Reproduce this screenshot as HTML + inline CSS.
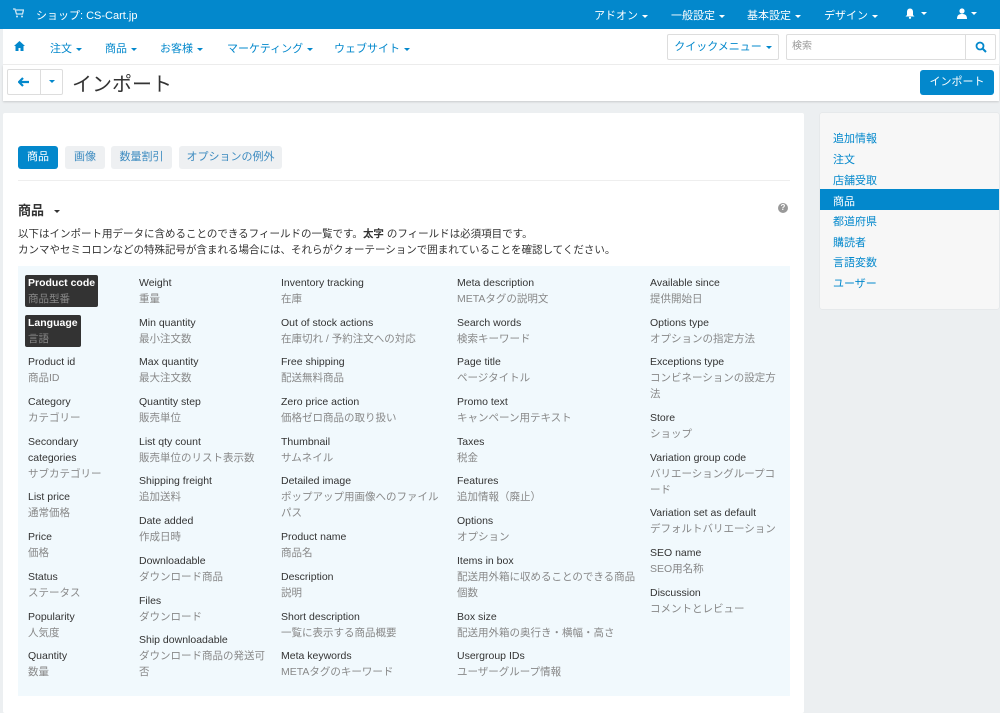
<!DOCTYPE html>
<html><head><meta charset="utf-8">
<style>
*{box-sizing:border-box;margin:0;padding:0}
body{width:1000px;height:691px;overflow:hidden;background:#eceff1;font-family:"Liberation Sans","Noto Sans CJK JP",sans-serif;font-size:11px;color:#333;position:relative}
.top{position:absolute;left:0;top:0;width:1000px;height:29px;background:#0388cc;color:#fff;font-size:11px}
.top span{position:absolute;top:7px;white-space:nowrap}
.car{display:inline-block;width:0;height:0;border-left:3px solid transparent;border-right:3px solid transparent;border-top:3px solid currentColor;vertical-align:middle;margin-left:4px}
.nav{position:absolute;left:3px;top:29px;width:996px;height:36px;background:#fff;border-bottom:1px solid #eee}
.nav span{position:absolute;top:11px;color:#0388cc;font-size:11px;white-space:nowrap}
.bar{position:absolute;left:3px;top:65px;width:996px;height:36px;background:#fff;box-shadow:0 1px 2px rgba(0,0,0,.15)}
.main{position:absolute;left:3px;top:113px;width:801px;height:600px;background:#fff;border-radius:2px}
.side{position:absolute;left:820px;top:113px;width:179px;height:196px;background:#f7f7f7;border-radius:2px;box-shadow:0 0 1px rgba(0,0,0,.15)}
.side div{position:absolute;left:13px;color:#0388cc;font-size:11px}
.tab{position:absolute;top:146px;height:23px;border-radius:3px;background:#eef0f2;color:#3d8bc0;font-size:11px;line-height:23px;text-align:center}
.grid{position:absolute;left:18px;top:266px;width:772px;height:430px;background:#f1f9fd}
.col{position:absolute;top:9px}
.it{line-height:16px;margin-bottom:7.7px;white-space:nowrap;font-size:10.5px}
.it b{font-weight:normal;color:#333;display:block}
.it i{font-style:normal;color:#888;display:block}
.dk{background:#333;padding:0 3px;margin-left:-3px;border-radius:2px;display:table}
.dk b{color:#fff;font-weight:bold}
</style></head><body>
<div class="top">
<svg style="position:absolute;left:13px;top:8px" width="11" height="10" viewBox="0 0 11 10"><path d="M0 1h2l1.5 5h6l1-4H3" fill="none" stroke="#cfe6f4" stroke-width="1.3"/><circle cx="4" cy="8.5" r="1" fill="#cfe6f4"/><circle cx="9" cy="8.5" r="1" fill="#cfe6f4"/></svg>
<span style="left:36px">ショップ: CS-Cart.jp</span>
<span style="left:594px">アドオン<i class="car"></i></span>
<span style="left:671px">一般設定<i class="car"></i></span>
<span style="left:747px">基本設定<i class="car"></i></span>
<span style="left:824px">デザイン<i class="car"></i></span>
<svg style="position:absolute;left:905px;top:8px" width="10" height="11" viewBox="0 0 10 11"><path d="M5 0.5C3 0.5 2 2 2 4v3L0.5 8.5h9L8 7V4C8 2 7 0.5 5 0.5z" fill="#fff"/><circle cx="5" cy="9.8" r="1.1" fill="#fff"/></svg>
<span style="left:917px"><i class="car"></i></span>
<svg style="position:absolute;left:957px;top:8px" width="10" height="11" viewBox="0 0 10 11"><circle cx="5" cy="3" r="2.6" fill="#fff"/><path d="M0 11c0-4 2-5 5-5s5 1 5 5z" fill="#fff"/></svg>
<span style="left:967px"><i class="car"></i></span>
</div>
<div class="nav">
<svg style="position:absolute;left:11px;top:12px" width="11" height="10" viewBox="0 0 11 10"><path d="M5.5 0L0 5h1.5v5h3V7h2v3h3V5H11z" fill="#0388cc"/></svg>
<span style="left:47px">注文<i class="car"></i></span>
<span style="left:102px">商品<i class="car"></i></span>
<span style="left:157px">お客様<i class="car"></i></span>
<span style="left:224px">マーケティング<i class="car"></i></span>
<span style="left:331px">ウェブサイト<i class="car"></i></span>
<div style="position:absolute;left:664px;top:5px;width:112px;height:26px;border:1px solid #ddd;border-radius:2px;color:#0388cc;font-size:11px;line-height:24px;text-align:center">クイックメニュー<i class="car"></i></div>
<div style="position:absolute;left:783px;top:5px;width:210px;height:26px;border:1px solid #ddd;border-radius:2px;color:#999;font-size:10px;line-height:24px;padding-left:5px">検索
<div style="position:absolute;right:0;top:0;width:30px;height:24px;border-left:1px solid #ddd">
<svg style="position:absolute;left:9px;top:6px" width="12" height="12" viewBox="0 0 12 12"><circle cx="5" cy="5" r="3.5" fill="none" stroke="#0388cc" stroke-width="1.8"/><path d="M7.5 7.5L11 11" stroke="#0388cc" stroke-width="2"/></svg></div></div>
</div>
<div class="bar">
<div style="position:absolute;left:4px;top:4px;width:56px;height:26px;border:1px solid #ddd;border-radius:2px">
<svg style="position:absolute;left:10px;top:7px" width="11" height="10" viewBox="0 0 11 10"><path d="M5 1L1 5l4 4M1 5h10" fill="none" stroke="#0388cc" stroke-width="2.2"/></svg>
<div style="position:absolute;left:32px;top:0;width:1px;height:24px;background:#ddd"></div>
<i class="car" style="position:absolute;left:41px;top:10px;color:#0388cc;margin:0"></i></div>
<div style="position:absolute;left:69px;top:3px;font-size:20px;color:#333">インポート</div>
<div style="position:absolute;left:917px;top:5px;width:74px;height:25px;background:#0388cc;border-radius:3px;color:#fff;line-height:25px;text-align:center;font-size:11px">インポート</div>
</div>
<div class="main"></div>
<div class="tab" style="left:18px;width:40px;background:#0388cc;color:#fff">商品</div>
<div class="tab" style="left:65px;width:40px">画像</div>
<div class="tab" style="left:111px;width:61px">数量割引</div>
<div class="tab" style="left:179px;width:103px">オプションの例外</div>
<div style="position:absolute;left:18px;top:180px;width:772px;height:1px;background:#eee"></div>
<div style="position:absolute;left:18px;top:200px;font-size:13px;font-weight:bold">商品 <i class="car" style="margin-left:6px"></i></div>
<div style="position:absolute;left:778px;top:203px;width:10px;height:10px;border-radius:50%;background:#999;color:#fff;font-size:8px;text-align:center;line-height:10px;font-weight:bold">?</div>
<div style="position:absolute;left:18px;top:226px;font-size:10.5px;line-height:16px;white-space:nowrap">以下はインポート用データに含めることのできるフィールドの一覧です。<b>太字</b> のフィールドは必須項目です。<br>カンマやセミコロンなどの特殊記号が含まれる場合には、それらがクォーテーションで囲まれていることを確認してください。</div>
<div class="grid">
<div class="col" style="left:10px">
<div class="it dk"><b>Product code</b><i>商品型番</i></div>
<div class="it dk"><b>Language</b><i>言語</i></div>
<div class="it"><b>Product id</b><i>商品ID</i></div>
<div class="it"><b>Category</b><i>カテゴリー</i></div>
<div class="it"><b>Secondary<br>categories</b><i>サブカテゴリー</i></div>
<div class="it"><b>List price</b><i>通常価格</i></div>
<div class="it"><b>Price</b><i>価格</i></div>
<div class="it"><b>Status</b><i>ステータス</i></div>
<div class="it"><b>Popularity</b><i>人気度</i></div>
<div class="it"><b>Quantity</b><i>数量</i></div>
</div>
<div class="col" style="left:121px">
<div class="it"><b>Weight</b><i>重量</i></div>
<div class="it"><b>Min quantity</b><i>最小注文数</i></div>
<div class="it"><b>Max quantity</b><i>最大注文数</i></div>
<div class="it"><b>Quantity step</b><i>販売単位</i></div>
<div class="it"><b>List qty count</b><i>販売単位のリスト表示数</i></div>
<div class="it"><b>Shipping freight</b><i>追加送料</i></div>
<div class="it"><b>Date added</b><i>作成日時</i></div>
<div class="it"><b>Downloadable</b><i>ダウンロード商品</i></div>
<div class="it"><b>Files</b><i>ダウンロード</i></div>
<div class="it"><b>Ship downloadable</b><i>ダウンロード商品の発送可<br>否</i></div>
</div>
<div class="col" style="left:263px">
<div class="it"><b>Inventory tracking</b><i>在庫</i></div>
<div class="it"><b>Out of stock actions</b><i>在庫切れ / 予約注文への対応</i></div>
<div class="it"><b>Free shipping</b><i>配送無料商品</i></div>
<div class="it"><b>Zero price action</b><i>価格ゼロ商品の取り扱い</i></div>
<div class="it"><b>Thumbnail</b><i>サムネイル</i></div>
<div class="it"><b>Detailed image</b><i>ポップアップ用画像へのファイル<br>パス</i></div>
<div class="it"><b>Product name</b><i>商品名</i></div>
<div class="it"><b>Description</b><i>説明</i></div>
<div class="it"><b>Short description</b><i>一覧に表示する商品概要</i></div>
<div class="it"><b>Meta keywords</b><i>METAタグのキーワード</i></div>
</div>
<div class="col" style="left:439px">
<div class="it"><b>Meta description</b><i>METAタグの説明文</i></div>
<div class="it"><b>Search words</b><i>検索キーワード</i></div>
<div class="it"><b>Page title</b><i>ページタイトル</i></div>
<div class="it"><b>Promo text</b><i>キャンペーン用テキスト</i></div>
<div class="it"><b>Taxes</b><i>税金</i></div>
<div class="it"><b>Features</b><i>追加情報（廃止）</i></div>
<div class="it"><b>Options</b><i>オプション</i></div>
<div class="it"><b>Items in box</b><i>配送用外箱に収めることのできる商品<br>個数</i></div>
<div class="it"><b>Box size</b><i>配送用外箱の奥行き・横幅・高さ</i></div>
<div class="it"><b>Usergroup IDs</b><i>ユーザーグループ情報</i></div>
</div>
<div class="col" style="left:632px">
<div class="it"><b>Available since</b><i>提供開始日</i></div>
<div class="it"><b>Options type</b><i>オプションの指定方法</i></div>
<div class="it"><b>Exceptions type</b><i>コンビネーションの設定方<br>法</i></div>
<div class="it"><b>Store</b><i>ショップ</i></div>
<div class="it"><b>Variation group code</b><i>バリエーショングループコ<br>ード</i></div>
<div class="it"><b>Variation set as default</b><i>デフォルトバリエーション</i></div>
<div class="it"><b>SEO name</b><i>SEO用名称</i></div>
<div class="it"><b>Discussion</b><i>コメントとレビュー</i></div>
</div>
</div>
<div class="side">
<div style="top:17px">追加情報</div>
<div style="top:38px">注文</div>
<div style="top:59px">店舗受取</div>
<div style="top:76px;left:0;width:179px;height:21px;background:#0388cc;color:#fff;padding:4px 13px">商品</div>
<div style="top:100px">都道府県</div>
<div style="top:121px">購読者</div>
<div style="top:141px">言語変数</div>
<div style="top:162px">ユーザー</div>
</div>
</body></html>
